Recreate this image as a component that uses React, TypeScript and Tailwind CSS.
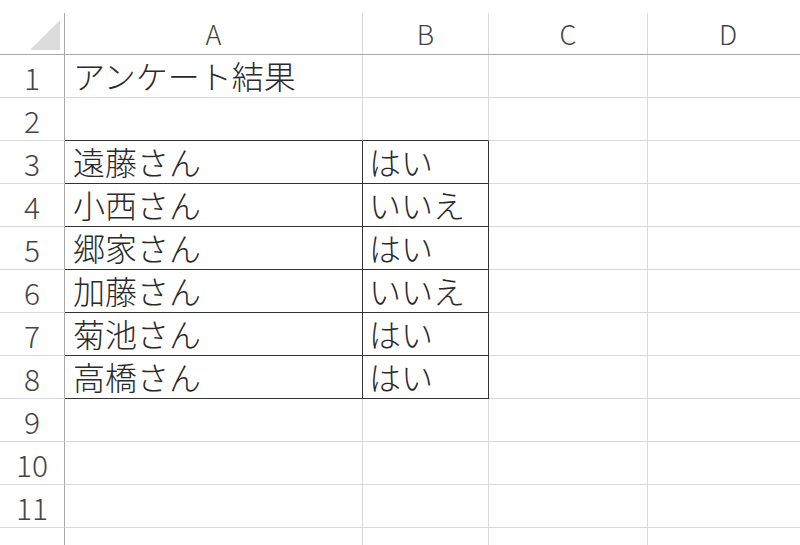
import React from "react";

const jp = { fontFamily: '"Noto Sans CJK JP", "Noto Sans", sans-serif' } as React.CSSProperties;

type Row = { n: string; a: string; b: string };

const rows: Row[] = [
  { n: "1", a: "アンケート結果", b: "" },
  { n: "2", a: "", b: "" },
  { n: "3", a: "遠藤さん", b: "はい" },
  { n: "4", a: "小西さん", b: "いいえ" },
  { n: "5", a: "郷家さん", b: "はい" },
  { n: "6", a: "加藤さん", b: "いいえ" },
  { n: "7", a: "菊池さん", b: "はい" },
  { n: "8", a: "高橋さん", b: "はい" },
  { n: "9", a: "", b: "" },
  { n: "10", a: "", b: "" },
  { n: "11", a: "", b: "" },
  { n: "", a: "", b: "" },
];

export default function App() {
  return (
    <div className="w-[800px] h-[545px] overflow-hidden bg-white text-[#2a2a2a]" style={jp}>
      {/* header row */}
      <div className="flex h-[55px] border-b border-[#a9a9a9]">
        <div className="w-[65px] shrink-0 mt-[13px] border-r border-[#a9a9a9] flex items-end justify-end pr-[4px] pb-[4px]">
          <svg width="30" height="30" viewBox="0 0 30 30">
            <polygon points="30,0 30,30 0,30" fill="#dcdcdc" />
          </svg>
        </div>
        {[
          { l: "A", w: "w-[298px]" },
          { l: "B", w: "w-[126px]" },
          { l: "C", w: "w-[159px]" },
        ].map((c) => (
          <div
            key={c.l}
            className={`${c.w} shrink-0 mt-[13px] border-r border-[#d9d9d9] flex items-center justify-center text-[27px] font-light text-[#444] leading-none`}
          >
            {c.l}
          </div>
        ))}
        <div className="flex-1 mt-[13px] flex items-center justify-center pl-[8px] text-[27px] font-light text-[#444] leading-none">
          D
        </div>
      </div>
      {rows.map((r, i) => {
        const idx = i + 1;
        const boxed = idx >= 3 && idx <= 8;
        const topOfBox = idx === 2;
        const bottomCls = boxed || topOfBox ? "border-b-[#333]" : "border-b-[#dadada]";
        return (
          <div key={i} className="flex h-[43px]">
            <div className="w-[65px] shrink-0 border-r border-b border-r-[#a9a9a9] border-b-[#dadada] flex items-center justify-center text-[30px] font-light text-[#444] leading-none pt-[2px]">
              {r.n}
            </div>
            <div
              className={`w-[298px] shrink-0 border-r border-b ${bottomCls} ${boxed ? "border-r-[#333]" : "border-r-[#dadada]"} flex items-end pl-[8px] pb-[3px] text-[32px] font-light leading-[38px] whitespace-nowrap`}
            >
              {r.a}
            </div>
            <div
              className={`w-[126px] shrink-0 border-r border-b ${bottomCls} ${boxed ? "border-r-[#333]" : "border-r-[#dadada]"} flex items-end pl-[6px] pb-[3px] text-[32px] font-light leading-[38px] whitespace-nowrap`}
            >
              {r.b}
            </div>
            <div className="w-[159px] shrink-0 border-r border-b border-[#dadada]" />
            <div className="flex-1 border-b border-[#dadada]" />
          </div>
        );
      })}
    </div>
  );
}
